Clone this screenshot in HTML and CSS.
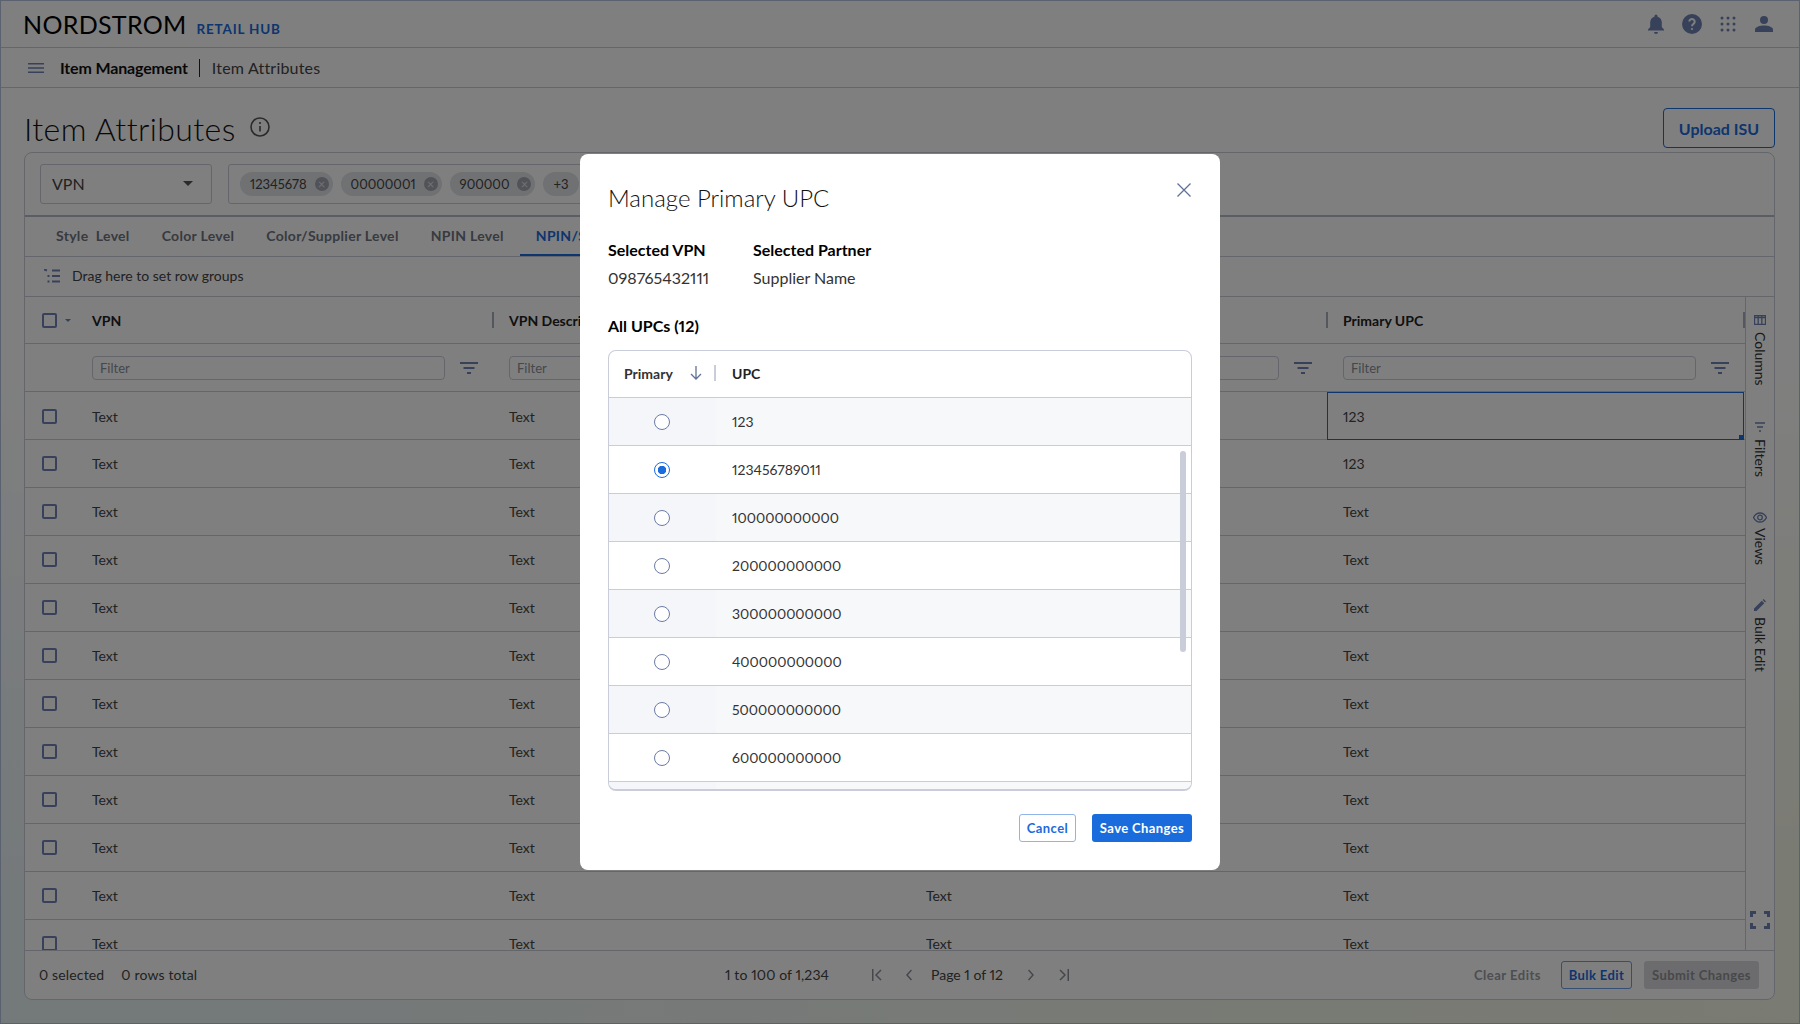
FILE: index.html
```html
<!DOCTYPE html>
<html>
<head>
  <link rel="stylesheet" href="styles.css">
</head>
<body>
  <div class="top-bar">
    <div class="brand">
      <span class="logo">NORDSTROM</span>
      <span class="hub">RETAIL HUB</span>
    </div>
    <div class="top-icons">
      <svg class="bell" width="18" height="20" viewBox="0 0 18 20"><path d="M9 0.5a1.5 1.5 0 0 1 1.5 1.5v.7c2.7.7 4.3 3 4.3 5.8v4.5l2.2 2.5v1H1v-1l2.2-2.5V8.500c0-2.800 1.600-5.100 4.300-5.800V2A1.500 1.500 0 0 1 9 .5zM7 18h4a2 2 0 0 1-4 0z"/></svg>
      <svg class="help" width="20" height="20" viewBox="0 0 20 20"><circle cx="10" cy="10" r="10"/><path class="help-mark" d="M7.300 7.600a2.700 2.700 0 1 1 4.200 2.300c-1 .6-1.500 1.100-1.500 2.300"/><circle class="help-dot" cx="10" cy="15" r="1.100"/></svg>
      <svg class="apps" width="16" height="16" viewBox="0 0 16 16"><circle cx="2" cy="2" r="1.500"/><circle cx="8" cy="2" r="1.500"/><circle cx="14" cy="2" r="1.500"/><circle cx="2" cy="8" r="1.500"/><circle cx="8" cy="8" r="1.500"/><circle cx="14" cy="8" r="1.500"/><circle cx="2" cy="14" r="1.500"/><circle cx="8" cy="14" r="1.500"/><circle cx="14" cy="14" r="1.500"/></svg>
      <svg class="user" width="18" height="16" viewBox="0 0 18 16"><circle cx="9" cy="4" r="4"/><path d="M0 16v-2.500C0 11 5 9.500 9 9.500s9 1.500 9 4V16z"/></svg>
    </div>
  </div>

  <div class="crumbs">
    <svg class="menu-icon" width="16" height="10" viewBox="0 0 16 10"><path d="M0 .75h16M0 5h16M0 9.250h16"/></svg>
    <span class="crumb-main">Item Management</span>
    <span class="crumb-sep"></span>
    <span class="crumb-sub">Item Attributes</span>
  </div>

  <div class="main">
    <div class="title-row">
      <div class="title-left">
        <h1 class="page-title">Item Attributes</h1>
        <svg class="info-icon" width="20" height="20" viewBox="0 0 20 20"><circle cx="10" cy="10" r="9"/><path d="M10 9v5.500"/><circle class="info-dot" cx="10" cy="6" r="1.100"/></svg>
      </div>
      <button class="upload">Upload ISU</button>
    </div>

    <div class="panel">
      <div class="search-row">
        <div class="select"><span>VPN</span><i class="caret"></i></div>
        <div class="multi">
          <span class="chip">12345678<i class="chip-x">&times;</i></span>
          <span class="chip">00000001<i class="chip-x">&times;</i></span>
          <span class="chip">900000<i class="chip-x">&times;</i></span>
          <span class="chip">+3</span>
        </div>
      </div>

      <div class="tabs">
        <div class="tab">Style &nbsp;Level</div>
        <div class="tab">Color Level</div>
        <div class="tab">Color/Supplier Level</div>
        <div class="tab">NPIN Level</div>
        <div class="tab active">NPIN/Supplier Level</div>
      </div>

      <div class="drag-row">
        <svg class="drag-icon" width="16" height="14" viewBox="0 0 16 14"><path d="M8 1.500h8M8 7h8M8 12.500h8"/><path d="M0 .5l3 1M3.500 7h2M3.500 12.500h2"/></svg>
        <span>Drag here to set row groups</span>
      </div>

      <div class="grid-wrap">
        <div class="grid">
          <div class="row head-row">
            <div class="cell check-cell"><i class="check"></i><i class="mini-caret"></i></div>
            <div class="cell head">VPN</div>
            <div class="cell head sized">VPN Description</div>
            <div class="cell head sized">Partner</div>
            <div class="cell head sized last-head">Primary UPC</div>
          </div>
          <div class="row filter-row">
            <div class="cell check-cell"></div>
            <div class="cell"><div class="filter-input">Filter</div><svg class="funnel" width="18" height="12" viewBox="0 0 18 12"><path d="M0 1h18M3.500 6h11M7 11h4"/></svg></div>
            <div class="cell"><div class="filter-input">Filter</div><svg class="funnel" width="18" height="12" viewBox="0 0 18 12"><path d="M0 1h18M3.500 6h11M7 11h4"/></svg></div>
            <div class="cell"><div class="filter-input">Filter</div><svg class="funnel" width="18" height="12" viewBox="0 0 18 12"><path d="M0 1h18M3.500 6h11M7 11h4"/></svg></div>
            <div class="cell"><div class="filter-input">Filter</div><svg class="funnel" width="18" height="12" viewBox="0 0 18 12"><path d="M0 1h18M3.500 6h11M7 11h4"/></svg></div>
          </div>
          <div class="row"><div class="cell check-cell"><i class="check"></i></div><div class="cell">Text</div><div class="cell">Text</div><div class="cell">Text</div><div class="cell selected">123<i class="handle"></i></div></div>
          <div class="row"><div class="cell check-cell"><i class="check"></i></div><div class="cell">Text</div><div class="cell">Text</div><div class="cell">Text</div><div class="cell">123</div></div>
          <div class="row"><div class="cell check-cell"><i class="check"></i></div><div class="cell">Text</div><div class="cell">Text</div><div class="cell">Text</div><div class="cell">Text</div></div>
          <div class="row"><div class="cell check-cell"><i class="check"></i></div><div class="cell">Text</div><div class="cell">Text</div><div class="cell">Text</div><div class="cell">Text</div></div>
          <div class="row"><div class="cell check-cell"><i class="check"></i></div><div class="cell">Text</div><div class="cell">Text</div><div class="cell">Text</div><div class="cell">Text</div></div>
          <div class="row"><div class="cell check-cell"><i class="check"></i></div><div class="cell">Text</div><div class="cell">Text</div><div class="cell">Text</div><div class="cell">Text</div></div>
          <div class="row"><div class="cell check-cell"><i class="check"></i></div><div class="cell">Text</div><div class="cell">Text</div><div class="cell">Text</div><div class="cell">Text</div></div>
          <div class="row"><div class="cell check-cell"><i class="check"></i></div><div class="cell">Text</div><div class="cell">Text</div><div class="cell">Text</div><div class="cell">Text</div></div>
          <div class="row"><div class="cell check-cell"><i class="check"></i></div><div class="cell">Text</div><div class="cell">Text</div><div class="cell">Text</div><div class="cell">Text</div></div>
          <div class="row"><div class="cell check-cell"><i class="check"></i></div><div class="cell">Text</div><div class="cell">Text</div><div class="cell">Text</div><div class="cell">Text</div></div>
          <div class="row"><div class="cell check-cell"><i class="check"></i></div><div class="cell">Text</div><div class="cell">Text</div><div class="cell">Text</div><div class="cell">Text</div></div>
          <div class="row"><div class="cell check-cell"><i class="check"></i></div><div class="cell">Text</div><div class="cell">Text</div><div class="cell">Text</div><div class="cell">Text</div></div>
        </div>

        <div class="side">
          <div class="side-item columns">
            <svg width="12" height="10" viewBox="0 0 12 10"><path d="M.5.5h11v9H.5zM4.200.5v9M7.800.5v9M.5 2.500h11"/></svg>
            <span>Columns</span>
          </div>
          <div class="side-item filters">
            <svg width="10" height="10" viewBox="0 0 10 10"><path d="M0 1h10M2 5h6M4 9h2"/></svg>
            <span>Filters</span>
          </div>
          <div class="side-item views">
            <svg width="14" height="11" viewBox="0 0 14 11"><path d="M.5 5.500C2 2.500 4.300 1 7 1s5 1.500 6.500 4.500C12 8.500 9.700 10 7 10S2 8.500.5 5.500z"/><circle cx="7" cy="5.500" r="2.300"/></svg>
            <span>Views</span>
          </div>
          <div class="side-item bulk">
            <svg width="12" height="12" viewBox="0 0 12 12"><path class="solid" d="M0 12V9.500L7.800 1.700l2.500 2.500L2.500 12zM8.600.9l1-.9 2.400 2.400-.9 1z"/></svg>
            <span>Bulk Edit</span>
          </div>
          <svg class="expand" width="20" height="18" viewBox="0 0 20 18"><path d="M1.500 6V1.500H6M14 1.500h4.500V6M18.500 12v4.500H14M6 16.500H1.500V12"/></svg>
        </div>
      </div>

      <div class="foot">
        <div class="foot-left"><span>0 selected</span><span>0 rows total</span></div>
        <div class="pager">
          <span class="range">1 to 100 of 1,234</span>
          <svg class="pg first" width="10" height="12" viewBox="0 0 10 12"><path d="M.75 0v12M9 1L4 6l5 5"/></svg>
          <svg class="pg prev" width="6" height="12" viewBox="0 0 6 12"><path d="M5.500 1L1 6l4.500 5"/></svg>
          <span class="page-no">Page 1 of 12</span>
          <svg class="pg next" width="6" height="12" viewBox="0 0 6 12"><path d="M.5 1L5 6l-4.500 5"/></svg>
          <svg class="pg last" width="10" height="12" viewBox="0 0 10 12"><path d="M9.250 0v12M1 1l5 5-5 5"/></svg>
        </div>
        <div class="foot-actions">
          <span class="clear">Clear Edits</span>
          <button class="small outline">Bulk Edit</button>
          <button class="small disabled">Submit Changes</button>
        </div>
      </div>
    </div>
  </div>

  <div class="overlay">
    <div class="modal">
      <div class="modal-head">
        <div class="modal-title">Manage Primary UPC</div>
        <svg class="close" width="14" height="14" viewBox="0 0 14 14"><path d="M.5.5l13 13M13.500.5l-13 13"/></svg>
      </div>
      <div class="modal-info">
        <div class="info-col first-col">
          <div class="info-label">Selected VPN</div>
          <div class="info-value">098765432111</div>
        </div>
        <div class="info-col">
          <div class="info-label">Selected Partner</div>
          <div class="info-value">Supplier Name</div>
        </div>
      </div>
      <div class="all-upcs">All UPCs (12)</div>
      <div class="upc-table">
        <div class="upc-head">
          <div class="upc-primary">
            <span>Primary</span>
            <svg width="12" height="14" viewBox="0 0 12 14"><path d="M6 0v13M1 8l5 5 5-5"/></svg>
          </div>
          <div class="upc-col">UPC</div>
        </div>
        <div class="upc-row"><div class="upc-radio"><i class="radio"></i></div><div class="upc-val">123</div></div>
        <div class="upc-row"><div class="upc-radio"><i class="radio on"></i></div><div class="upc-val">123456789011</div></div>
        <div class="upc-row"><div class="upc-radio"><i class="radio"></i></div><div class="upc-val">100000000000</div></div>
        <div class="upc-row"><div class="upc-radio"><i class="radio"></i></div><div class="upc-val">200000000000</div></div>
        <div class="upc-row"><div class="upc-radio"><i class="radio"></i></div><div class="upc-val">300000000000</div></div>
        <div class="upc-row"><div class="upc-radio"><i class="radio"></i></div><div class="upc-val">400000000000</div></div>
        <div class="upc-row"><div class="upc-radio"><i class="radio"></i></div><div class="upc-val">500000000000</div></div>
        <div class="upc-row"><div class="upc-radio"><i class="radio"></i></div><div class="upc-val">600000000000</div></div>
        <div class="upc-row"><div class="upc-radio"></div><div class="upc-val"></div></div>
        <div class="upc-scroll"></div>
      </div>
      <div class="modal-foot">
        <button class="small cancel">Cancel</button>
        <button class="small save">Save Changes</button>
      </div>
    </div>
  </div>
</body>
</html>
```

FILE: styles.css
```css
* {
  box-sizing: border-box;
}

body {
  margin: 0;
  width: 1800px;
  height: 1024px;
  overflow: hidden;
  border: 1px solid #b4c3de;
  background:
    linear-gradient(to bottom, #fff 0, #fff 35%, rgba(255, 255, 255, 0) 90%),
    linear-gradient(to right, #e8f2f6, #f4f6e4);
  font-family: Lato, "Open Sans", sans-serif;
  font-size: 14px;
  font-variant-numeric: proportional-nums;
  color: #444;
}

button {
  font-family: inherit;
  cursor: pointer;
}

svg {
  display: block;
  flex: none;
}

/* top bars */
.top-bar {
  height: 47px;
  background: #fff;
  border-bottom: 1px solid #c8cdd9;
  display: flex;
  align-items: center;
  justify-content: space-between;
  padding: 0 26px 0 22px;
}

.brand {
  display: flex;
  align-items: baseline;
  gap: 10px;
}

.logo {
  font-size: 25px;
  letter-spacing: 0.3px;
  color: #000;
}

.hub {
  font-size: 13.5px;
  font-weight: 700;
  letter-spacing: 0.8px;
  color: #1a6bdc;
}

.top-icons {
  display: flex;
  align-items: center;
  gap: 18px;
}

.top-icons svg {
  fill: #6f83b3;
}

.top-icons .help {
  margin-left: -1px;
}

.top-icons .user {
  margin-left: 1px;
}

.top-icons .help-mark {
  fill: none;
  stroke: #fff;
  stroke-width: 2;
}

.top-icons .help-dot {
  fill: #fff;
}

.crumbs {
  height: 40px;
  background: #fff;
  border-bottom: 1px solid #c8cdd9;
  display: flex;
  align-items: center;
  padding-left: 27px;
  font-size: 16px;
}

.menu-icon {
  fill: none;
  stroke: #6f83b3;
  stroke-width: 1.5;
  margin-right: 16px;
}

.crumb-main {
  font-weight: 700;
  letter-spacing: -0.15px;
  color: #111;
}

.crumb-sep {
  width: 1px;
  height: 18px;
  background: #222;
  margin: 0 12px 0 11px;
}

.crumb-sub {
  letter-spacing: 0.2px;
  color: #444;
}

/* page */
.main {
  padding: 0 24px 0 23px;
}

.title-row {
  height: 64px;
  display: flex;
  align-items: flex-end;
  justify-content: space-between;
  padding-bottom: 4px;
}

.title-left {
  display: flex;
  align-items: center;
  gap: 14px;
  height: 40px;
}

.page-title {
  margin: 0;
  font-size: 32px;
  font-weight: 300;
  letter-spacing: 0.4px;
  color: #111;
}

.info-icon {
  fill: none;
  stroke: #555;
  stroke-width: 1.6;
  margin-top: -2px;
}

.info-icon .info-dot {
  fill: #555;
  stroke: none;
}

.upload {
  width: 112px;
  height: 40px;
  background: #fff;
  border: 1px solid #1a6bdc;
  border-radius: 4px;
  color: #1a6bdc;
  font-size: 16px;
  font-weight: 700;
}

.panel {
  height: 848px;
  background: #fff;
  border: 1px solid #c8cdd9;
  border-radius: 8px;
  display: flex;
  flex-direction: column;
  overflow: hidden;
}

.search-row {
  height: 64px;
  flex: none;
  border-bottom: 2px solid #b4bac8;
  display: flex;
  align-items: center;
  gap: 16px;
  padding-left: 15px;
}

.select {
  width: 172px;
  height: 40px;
  border: 1px solid #c8cdd9;
  border-radius: 3px;
  display: flex;
  align-items: center;
  justify-content: space-between;
  padding: 0 18px 2px 11px;
  font-size: 16px;
}

.caret {
  border-left: 5px solid transparent;
  border-right: 5px solid transparent;
  border-top: 5px solid #555;
}

.multi {
  width: 370px;
  height: 40px;
  border: 1px solid #c8cdd9;
  border-radius: 3px;
  display: flex;
  align-items: center;
  gap: 8px;
  padding-left: 11px;
}

.chip {
  height: 24px;
  border-radius: 12px;
  background: #e0e2e6;
  display: flex;
  align-items: center;
  gap: 8px;
  padding: 0 4px 0 10px;
  font-size: 13px;
  white-space: nowrap;
}

.chip:last-child {
  padding: 0 10px;
}

.chip-x {
  width: 14px;
  height: 14px;
  border-radius: 50%;
  background: #a2a6b0;
  color: #e0e2e6;
  font-style: normal;
  font-size: 13px;
  line-height: 14px;
  text-align: center;
}

.tabs {
  height: 40px;
  flex: none;
  border-bottom: 1px solid #c8cdd9;
  display: flex;
  padding-left: 15px;
}

.tab {
  padding: 0 16px;
  line-height: 38px;
  font-weight: 700;
  letter-spacing: 0.3px;
  color: #70747e;
  white-space: nowrap;
  height: 39px;
}

.tab.active {
  color: #1a6bdc;
  border-bottom: 2px solid #1a6bdc;
}

.drag-row {
  height: 40px;
  flex: none;
  border-bottom: 1px solid #c8cdd9;
  display: flex;
  align-items: center;
  gap: 12px;
  padding: 0 0 2px 19px;
}

.drag-icon {
  fill: none;
  stroke: #6f83b3;
  stroke-width: 2;
}

/* grid */
.grid-wrap {
  flex: 1;
  display: flex;
  min-height: 0;
}

.grid {
  width: 1720px;
  overflow: hidden;
}

.row {
  height: 48px;
  display: grid;
  grid-template-columns: 50px 417px 417px 417px 419px;
  border-bottom: 1px solid #c8cdd9;
}

.head-row {
  height: 47px;
}

.cell {
  display: flex;
  align-items: center;
  padding-left: 17px;
  position: relative;
  white-space: nowrap;
}

.check-cell {
  padding-left: 17px;
  gap: 5px;
}

.check {
  width: 15px;
  height: 15px;
  border: 2px solid #6f83b3;
  border-radius: 2px;
  background: #fff;
  flex: none;
}

.mini-caret {
  border-left: 3px solid transparent;
  border-right: 3px solid transparent;
  border-top: 3px solid #6f83b3;
  margin-left: 3px;
}

.head {
  font-weight: 700;
  color: #222;
}

.sized::before {
  content: "";
  position: absolute;
  left: 0;
  top: 15px;
  height: 16px;
  width: 2px;
  background: #a8aeba;
}

.last-head::after {
  content: "";
  position: absolute;
  right: 0;
  top: 15px;
  height: 16px;
  width: 2px;
  background: #a8aeba;
}

.filter-input {
  width: 353px;
  height: 24px;
  border: 1px solid #c8cdd9;
  border-radius: 4px;
  line-height: 22px;
  padding-left: 7px;
  font-size: 13px;
  color: #8a8f9a;
}

.funnel {
  fill: none;
  stroke: #6f83b3;
  stroke-width: 2;
  margin-left: 15px;
}

.selected {
  border: 1px solid #1a6bdc;
  height: 48px;
  margin: 0 1px;
  padding-left: 15px;
}

.handle {
  position: absolute;
  right: -1px;
  bottom: -1px;
  width: 5px;
  height: 5px;
  background: #1a6bdc;
}

.side {
  flex: 1;
  border-left: 1px solid #c8cdd9;
  display: flex;
  flex-direction: column;
  align-items: center;
  position: relative;
}

.side-item {
  display: flex;
  flex-direction: column;
  align-items: center;
  gap: 7px;
  color: #333;
  font-size: 14px;
}

.side-item span {
  writing-mode: vertical-rl;
}

.side-item svg {
  fill: none;
  stroke: #6f83b3;
  stroke-width: 1.3;
}

.side-item .solid {
  fill: #6f83b3;
  stroke: none;
}

.columns {
  margin-top: 18px;
}

.filters {
  margin-top: 36px;
}

.views {
  margin-top: 35px;
  gap: 5px;
}

.bulk {
  margin-top: 34px;
  gap: 6px;
}

.expand {
  position: absolute;
  bottom: 21px;
  left: 4px;
  fill: none;
  stroke: #6f83b3;
  stroke-width: 3;
}

/* footer */
.foot {
  height: 49px;
  flex: none;
  border-top: 1px solid #c8cdd9;
  display: grid;
  grid-template-columns: 1fr auto 1fr;
  align-items: center;
  padding: 0 15px 1px 14px;
  position: relative;
}

.foot-left {
  display: flex;
  gap: 17px;
  letter-spacing: 0.15px;
}

.pager {
  display: flex;
  align-items: center;
  margin-left: -4px;
}

.range {
  letter-spacing: 0.1px;
  margin-right: 43px;
}

.pg {
  fill: none;
  stroke: #8a8f9a;
  stroke-width: 1.5;
}

.prev {
  margin-left: 24px;
  margin-right: 19px;
}

.next {
  margin-left: 25px;
  margin-right: 25px;
}

.foot-actions {
  display: flex;
  align-items: center;
  justify-content: flex-end;
  gap: 12px;
}

.clear {
  font-size: 13px;
  font-weight: 700;
  letter-spacing: 0.5px;
  color: #9a9da4;
  margin-right: 8px;
}

.small {
  height: 28px;
  border-radius: 3px;
  font-size: 13px;
  font-weight: 700;
  letter-spacing: 0.4px;
  padding: 0;
}

.outline {
  width: 71px;
  background: #fff;
  border: 1px solid #6a9de6;
  color: #1a6bdc;
}

.disabled {
  width: 115px;
  background: #d8d9dc;
  border: none;
  color: #8f9196;
}

/* dialog */
.overlay {
  position: fixed;
  inset: 0;
  background: rgba(0, 0, 0, 0.5);
  display: flex;
  align-items: center;
  justify-content: center;
}

.modal {
  width: 640px;
  height: 716px;
  background: #fff;
  border-radius: 8px;
  padding: 28px;
}

.modal-head {
  display: flex;
  justify-content: space-between;
  align-items: flex-start;
  height: 34px;
  padding-right: 1px;
}

.modal-title {
  font-size: 24px;
  font-weight: 300;
  line-height: 32px;
  color: #111;
}

.close {
  fill: none;
  stroke: #5f7099;
  stroke-width: 1.3;
  margin-top: 1px;
}

.modal-info {
  display: flex;
  margin-top: 23px;
}

.first-col {
  width: 145px;
}

.info-label {
  font-size: 16px;
  font-weight: 700;
  line-height: 22px;
  color: #000;
}

.info-value {
  font-size: 16px;
  line-height: 22px;
  margin-top: 6px;
  color: #333;
}

.all-upcs {
  font-size: 16px;
  font-weight: 700;
  line-height: 22px;
  color: #000;
  margin-top: 26px;
}

.upc-table {
  position: relative;
  height: 441px;
  margin-top: 13px;
  border: 1px solid #c8cdd9;
  border-bottom-width: 2px;
  border-radius: 8px;
  overflow: hidden;
}

.upc-head {
  height: 47px;
  display: flex;
  align-items: center;
  padding-bottom: 2px;
  border-bottom: 1px solid #c8cdd9;
  font-weight: 700;
  color: #333;
}

.upc-primary {
  width: 107px;
  height: 16px;
  padding-left: 15px;
  display: flex;
  align-items: center;
  justify-content: space-between;
  padding-right: 12px;
  border-right: 2px solid #c8cdd9;
}

.upc-primary svg {
  fill: none;
  stroke: #5f7099;
  stroke-width: 1.3;
}

.upc-col {
  padding-left: 16px;
  color: #222;
}

.upc-row {
  height: 48px;
  display: flex;
  border-bottom: 1px solid #c8cdd9;
}

.upc-row:nth-child(even) .upc-radio {
  background: #f4f6fa;
}

.upc-row:nth-child(even) .upc-val {
  background: #f7f8fa;
}

.upc-radio {
  width: 107px;
  display: flex;
  align-items: center;
  justify-content: center;
  padding-right: 2px;
}

.upc-val {
  flex: 1;
  display: flex;
  align-items: center;
  padding-left: 16px;
  color: #333;
}

.radio {
  width: 16px;
  height: 16px;
  border-radius: 50%;
  border: 1.5px solid #6b7ba6;
  background: #fff;
}

.radio.on {
  border-color: #1a6bdc;
  background: radial-gradient(circle, #1a6bdc 0, #1a6bdc 4px, #fff 4.500px);
}

.upc-scroll {
  position: absolute;
  top: 100px;
  right: 5px;
  width: 6px;
  height: 201px;
  border-radius: 3px;
  background: #c8cdd9;
}

.modal-foot {
  display: flex;
  justify-content: flex-end;
  gap: 16px;
  margin-top: 23px;
}

.cancel {
  width: 57px;
  background: #fff;
  border: 1px solid #8fb4ea;
  color: #1a6bdc;
}

.save {
  width: 100px;
  background: #1a6bdc;
  border: none;
  color: #fff;
}
```
